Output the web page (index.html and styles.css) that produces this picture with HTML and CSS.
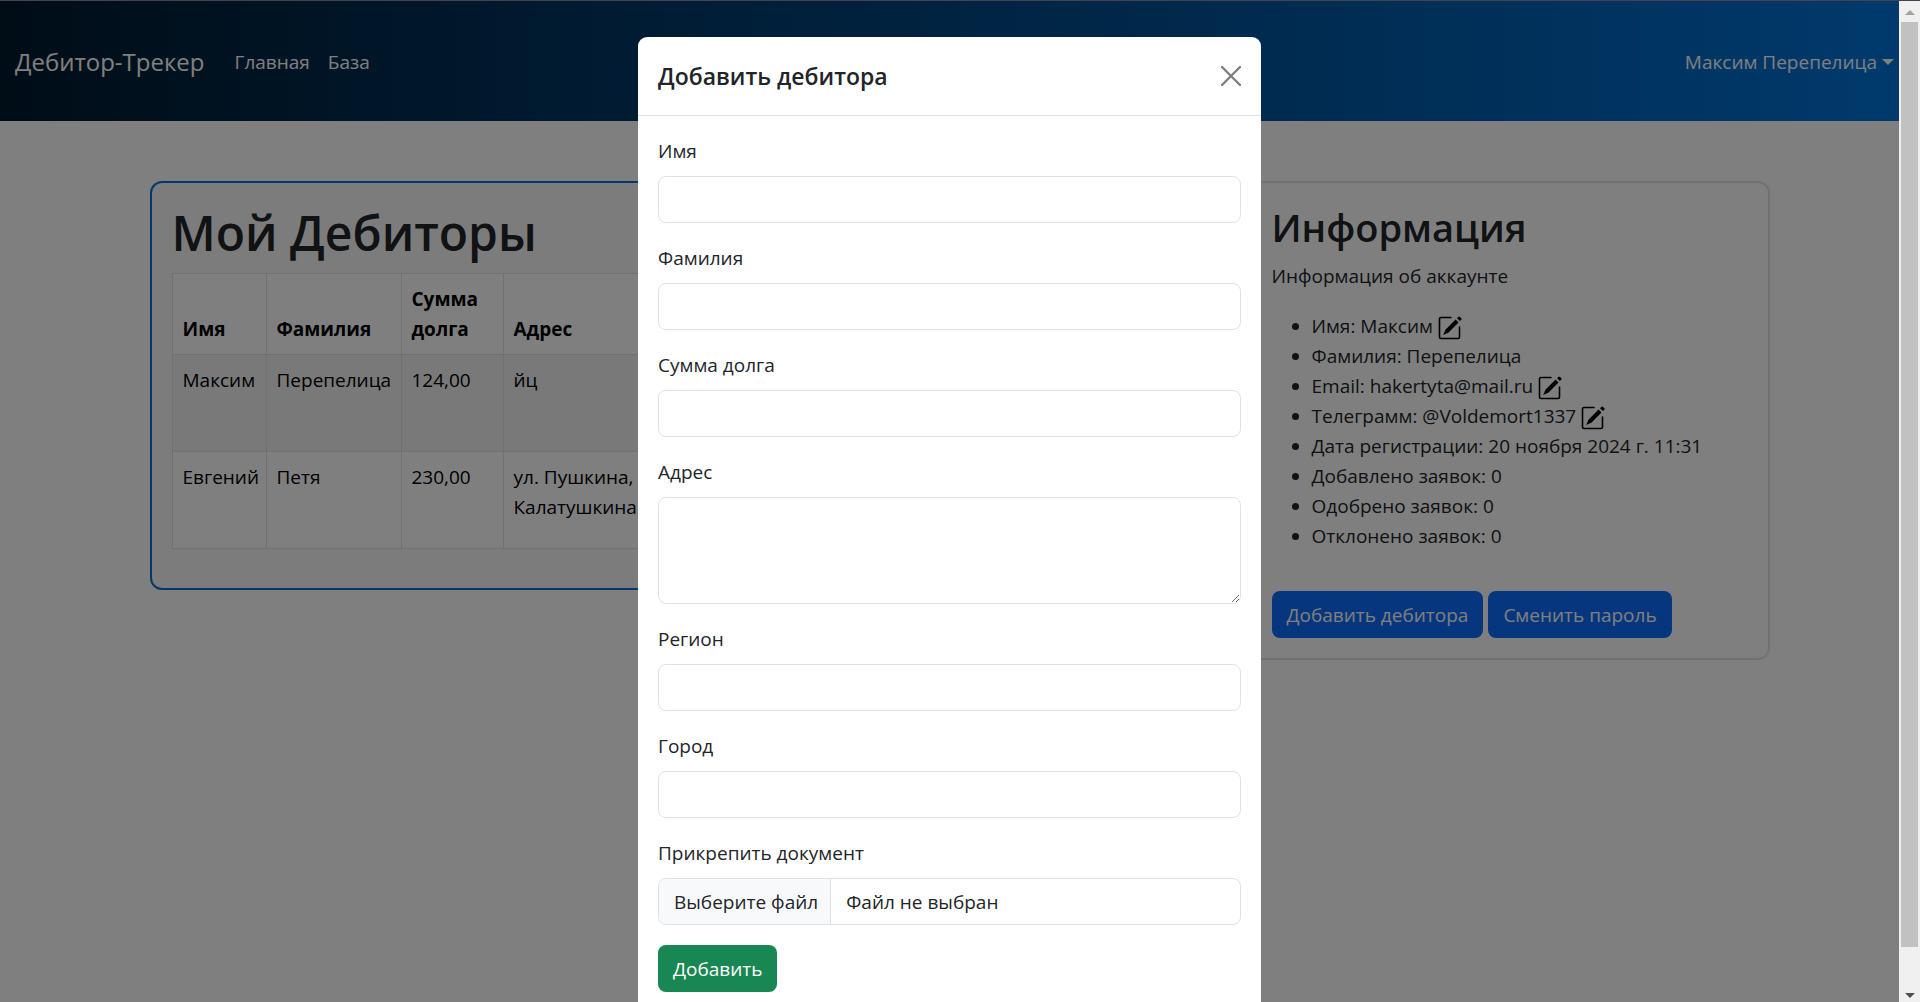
FILE: index.html
```html
<!DOCTYPE html>
<html lang="ru">
<head>
<meta charset="utf-8">
<meta name="viewport" content="width=device-width, initial-scale=1">
<title>Дебитор-Трекер</title>
<link rel="stylesheet" href="styles.css">
</head>
<body>
<svg class="sprite" aria-hidden="true">
  <symbol id="edit" viewBox="0 0 24 24">
    <path d="M13 1.500H3A1.500 1.500 0 0 0 1.500 3v18A1.500 1.500 0 0 0 3 22.500h17A1.500 1.500 0 0 0 21.500 21V11" fill="none" stroke="currentColor" stroke-width="1.600" stroke-linecap="round"/>
    <path d="M20.300.9a1.200 1.200 0 0 1 1.700 0l1.200 1.200a1.200 1.200 0 0 1 0 1.700l-1.300 1.300-2.900-2.900zM17.600 3.600l2.900 2.900L10.300 16.700 5.200 19l2.200-5.200z" fill="currentColor"/>
  </symbol>
</svg>
<div class="window">
  <div class="page">
    <nav class="navbar">
      <a class="brand" href="#">Дебитор-Трекер</a>
      <a class="nav-link" href="#">Главная</a>
      <a class="nav-link" href="#">База</a>
      <button class="user-menu" type="button">Максим Перепелица<span class="caret"></span></button>
    </nav>

    <main class="content">
      <section class="card card-debtors">
        <h1>Мой Дебиторы</h1>
        <table class="debtors">
          <thead>
            <tr><th class="col-name">Имя</th><th class="col-surname">Фамилия</th><th class="col-sum">Сумма долга</th><th class="col-address">Адрес</th><th></th></tr>
          </thead>
          <tbody>
            <tr><td>Максим</td><td>Перепелица</td><td>124,00</td><td>йц</td><td></td></tr>
            <tr><td>Евгений</td><td>Петя</td><td>230,00</td><td>ул. Пушкина, д. Калатушкина</td><td></td></tr>
          </tbody>
        </table>
      </section>

      <section class="card card-info">
        <h2>Информация</h2>
        <p>Информация об аккаунте</p>
        <ul>
          <li>Имя: Максим <button class="edit" type="button" aria-label="Изменить имя"><svg><use href="#edit"/></svg></button></li>
          <li>Фамилия: Перепелица</li>
          <li>Email: hakertyta@mail.ru <button class="edit" type="button" aria-label="Изменить email"><svg><use href="#edit"/></svg></button></li>
          <li>Телеграмм: @Voldemort1337 <button class="edit" type="button" aria-label="Изменить телеграмм"><svg><use href="#edit"/></svg></button></li>
          <li>Дата регистрации: 20 ноября 2024 г. 11:31</li>
          <li>Добавлено заявок: 0</li>
          <li>Одобрено заявок: 0</li>
          <li>Отклонено заявок: 0</li>
        </ul>
        <div class="actions">
          <button class="btn btn-primary" type="button">Добавить дебитора</button>
          <button class="btn btn-primary" type="button">Сменить пароль</button>
        </div>
      </section>
    </main>

    <div class="backdrop">
      <div class="modal" role="dialog" aria-modal="true" aria-labelledby="modal-title">
        <header class="modal-header">
          <h5 id="modal-title">Добавить дебитора</h5>
          <button class="close" type="button" aria-label="Закрыть">
            <svg viewBox="0 0 20 20"><path d="M1 1l18 18M19 1L1 19" stroke="currentColor" stroke-width="2.400" stroke-linecap="round"/></svg>
          </button>
        </header>
        <form class="modal-body">
          <div class="field"><label for="name">Имя</label><input id="name" type="text"></div>
          <div class="field"><label for="surname">Фамилия</label><input id="surname" type="text"></div>
          <div class="field"><label for="sum">Сумма долга</label><input id="sum" type="text"></div>
          <div class="field"><label for="address">Адрес</label><textarea id="address"></textarea></div>
          <div class="field"><label for="region">Регион</label><input id="region" type="text"></div>
          <div class="field"><label for="city">Город</label><input id="city" type="text"></div>
          <div class="field">
            <label for="document">Прикрепить документ</label>
            <input class="visually-hidden" id="document" type="file">
            <label class="file" for="document"><span class="file-button">Выберите файл</span><span class="file-name">Файл не выбран</span></label>
          </div>
          <button class="btn btn-success" type="submit">Добавить</button>
        </form>
      </div>
    </div>
  </div>
  <div class="scrollbar" aria-hidden="true">
    <span class="arrow arrow-up"></span>
    <span class="thumb"></span>
    <span class="arrow arrow-down"></span>
  </div>
</div>
</body>
</html>
```
FILE: styles.css
```css
* { box-sizing: border-box; }

body {
  margin: 0;
  font: 400 19px/30px "Open Sans", "Noto Sans", sans-serif;
  color: #212529;
  background: #fff;
}

h1, h2, h5, p { margin: 0; }

button, input, textarea { font: inherit; color: inherit; }

button { cursor: pointer; }

.sprite { display: none; }

.window {
  display: flex;
  height: 100vh;
  border-top: 1px solid #46424e;
  overflow: hidden;
}

.page {
  position: relative;
  flex: 1;
  min-width: 0;
}

/* Navigation */
.navbar {
  display: flex;
  align-items: center;
  height: 120px;
  padding: 2px 5px 0 15px;
  color: #fff;
  background: linear-gradient(90deg, #001a2e, #0074d9);
}

.brand, .nav-link {
  color: inherit;
  text-decoration: none;
}

.brand {
  margin-right: 21px;
  font-size: 24px;
}

.nav-link { padding: 0 9px; }

.user-menu {
  display: flex;
  align-items: center;
  gap: 5px;
  margin-left: auto;
  padding: 0;
  border: 0;
  background: none;
}

.caret {
  border: 6px solid transparent;
  border-top-color: currentColor;
  border-bottom: 0;
}

/* Account page */
.content {
  display: grid;
  grid-template-columns: minmax(0, 1fr) 520px;
  gap: 20px;
  align-items: start;
  max-width: 1660px;
  margin: 0 auto;
  padding: 60px 10px 60px 30px;
}

.card {
  padding: 20px;
  border: 2px solid #dee2e6;
  border-radius: 12px;
}

.card-debtors {
  padding-bottom: 39px;
  border-color: #0074d9;
  background: #f9f9f9;
}

h1 {
  margin-bottom: 10px;
  font-size: 48px;
  font-weight: 600;
  line-height: 60px;
}

h2 {
  margin-bottom: 10px;
  font-size: 38px;
  font-weight: 600;
  line-height: 48px;
}

.debtors {
  width: 100%;
  table-layout: fixed;
  border-collapse: collapse;
  color: #000;
  background: #fff;
}

.debtors th, .debtors td {
  padding: 10px;
  border: 1px solid #dee2e6;
  text-align: left;
  vertical-align: top;
}

.debtors th {
  font-weight: 700;
  vertical-align: bottom;
}

.debtors td { height: 97px; }

.debtors tbody tr:nth-child(odd) { background: #f2f2f2; }

.col-name { width: 94px; }
.col-surname { width: 135px; }
.col-sum { width: 102px; }
.col-address { width: 190px; }

.card-info p { margin-bottom: 20px; }

.card-info ul {
  margin: 0 0 40px;
  padding-left: 40px;
}

.edit {
  display: inline-block;
  height: 24px;
  padding: 0;
  border: 0;
  background: none;
  color: #000;
  vertical-align: middle;
}

.edit svg {
  display: block;
  width: 24px;
  height: 24px;
}

.actions {
  display: flex;
  gap: 5px;
}

.btn {
  height: 47px;
  padding: 0 15px;
  border: 0;
  border-radius: 8px;
  color: #fff;
}

.btn-primary { background: #0d6efd; }
.btn-success { background: #198754; }

/* Modal */
.backdrop {
  position: absolute;
  inset: 0;
  padding-top: 36px;
  background: rgba(0, 0, 0, 0.5);
  overflow: hidden;
}

.modal {
  width: 623px;
  max-width: 100%;
  margin: 0 auto;
  border-radius: 9px;
  background: #fff;
}

.modal-header {
  display: flex;
  align-items: center;
  justify-content: space-between;
  height: 79px;
  padding: 0 20px;
  border-bottom: 1px solid #dee2e6;
}

.modal-header h5 {
  font-size: 23px;
  font-weight: 600;
}

.close {
  padding: 0;
  border: 0;
  background: none;
  color: #7f7f7f;
}

.close svg {
  display: block;
  width: 20px;
  height: 20px;
}

.modal-body { padding: 20px; }

.field {
  display: flex;
  flex-direction: column;
  gap: 10px;
  margin-bottom: 20px;
}

.field input[type="text"], .field textarea, .file {
  width: 100%;
  height: 47px;
  padding: 0 15px;
  border: 1px solid #dee2e6;
  border-radius: 8px;
  background: #fff;
}

.field textarea {
  height: 107px;
  padding: 8px 15px;
  resize: vertical;
}

.field .file {
  display: flex;
  padding: 0;
  line-height: 46px;
  overflow: hidden;
}

.file-button {
  padding: 0 12px 0 15px;
  border-right: 1px solid #dee2e6;
  background: #f8f9fa;
}

.file-name { padding: 0 15px; }

.visually-hidden {
  position: absolute;
  width: 1px;
  height: 1px;
  opacity: 0;
}

/* Scrollbar */
.scrollbar {
  display: flex;
  flex-direction: column;
  align-items: center;
  width: 21px;
  padding: 9px 0 4px;
  background: #f0f0f0;
}

.arrow { border: 5px solid transparent; }

.arrow-up {
  border-top: 0;
  border-bottom-color: #a3a3a3;
}

.arrow-down {
  border-bottom: 0;
  border-top-color: #505050;
}

.thumb {
  flex: 1;
  width: 17px;
  margin: 7px 0 46px;
  background: #c1c1c1;
}
```
